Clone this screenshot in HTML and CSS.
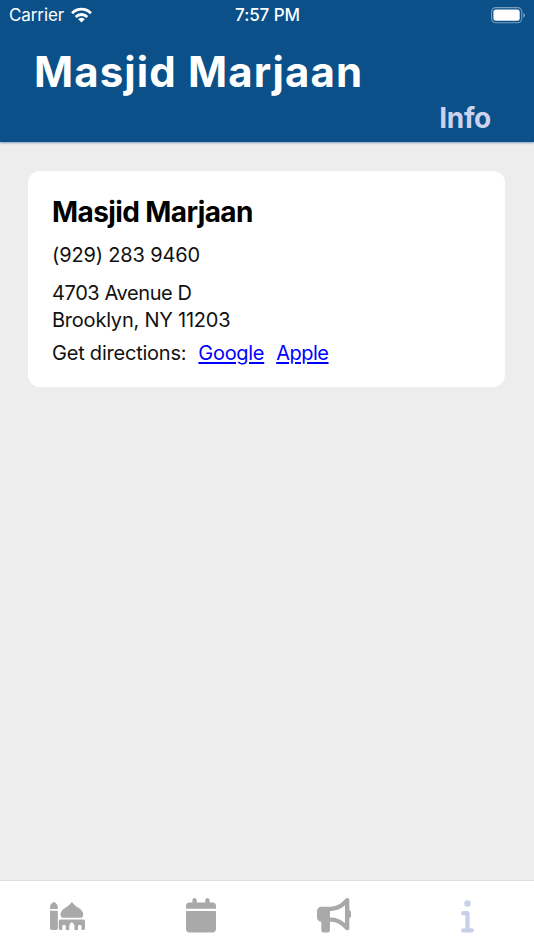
FILE: index.html
```html
<!DOCTYPE html>
<html lang="en">
<head>
<meta charset="utf-8">
<title>Masjid Marjaan</title>
<link rel="stylesheet" href="styles.css">
</head>
<body>
<header class="header">
  <div class="status">
    <div class="carrier"><span>Carrier</span>
      <svg class="wifi" viewBox="0 0 21 16"><g fill="none" stroke="#fff" stroke-width="2.9"><path d="M1.1 6.2C6.4 .8 14.6 .8 19.9 6.2"/><path d="M4.7 10C8 6.7 13 6.7 16.3 10"/></g><path fill="#fff" d="M7.2 12.2Q10.5 9.4 13.8 12.2L10.5 15.6Z"/></svg>
    </div>
    <span class="time">7:57 PM</span>
    <svg class="battery" viewBox="0 0 35 17"><rect x=".6" y=".6" width="30.2" height="15.2" rx="4.2" fill="none" stroke="#fff" stroke-opacity=".45" stroke-width="1.1"/><rect x="2.4" y="2.5" width="26.3" height="11.3" rx="2.5" fill="#fff"/><path d="M32.3 5.7q1.7.6 1.7 2.5t-1.7 2.5z" fill="#fff" fill-opacity=".45"/></svg>
  </div>
  <h1 class="title">Masjid Marjaan</h1>
  <div class="page-name">Info</div>
</header>
<main class="content">
  <section class="card">
    <h2 class="name">Masjid Marjaan</h2>
    <p class="phone">(929) 283 9460</p>
    <p class="address"><span class="street">4703 Avenue D</span><br><span class="city">Brooklyn, NY 11203</span></p>
    <p class="directions"><span>Get directions:</span><a class="google" href="#">Google</a><a class="apple" href="#">Apple</a></p>
  </section>
</main>
<nav class="tabs">
  <a class="tab"><svg class="mosque" viewBox="0 0 640 512"><path transform="scale(1.12 1)" d="M0 480c0 17.67 14.33 32 32 32h64c17.67 0 32-14.33 32-32V160H0v320zM64 0S0 32 0 96v32h128V96c0-64-64-96-64-96z"/><path d="M579.16 288c17.86-17.39 28.84-37.34 28.84-58.91 0-52.86-41.79-93.79-87.92-122.9-41.94-26.47-80.63-57.77-111.96-96.22L400 0l-8.12 9.97c-31.33 38.45-70.01 69.76-111.96 96.22C233.79 135.3 192 176.23 192 229.09c0 21.57 10.98 41.52 28.84 58.91h358.32zM608 320H192c-17.67 0-32 14.33-32 32v128c0 17.67 14.33 32 32 32h32v-64c0-17.67 14.33-32 32-32s32 14.33 32 32v64h64v-72c0-48 48-72 48-72s48 24 48 72v72h64v-64c0-17.67 14.33-32 32-32s32 14.33 32 32v64h32c17.67 0 32-14.33 32-32V352c0-17.67-14.33-32-32-32z"/></svg></a>
  <a class="tab"><svg class="calendar" viewBox="0 0 448 512"><path d="M96 32V64H48C21.5 64 0 85.5 0 112v48H448V112c0-26.5-21.5-48-48-48H352V32c0-17.7-14.3-32-32-32s-32 14.3-32 32V64H160V32c0-17.7-14.3-32-32-32S96 14.3 96 32zM448 192H0V464c0 26.5 21.5 48 48 48H400c26.5 0 48-21.5 48-48V192z"/></svg></a>
  <a class="tab"><svg class="bullhorn" viewBox="0 0 512 512"><path d="M480 32c0-12.9-7.8-24.6-19.8-29.6s-25.7-2.2-34.9 6.9L381.7 53c-48 48-113.1 75-181 75H192 160 64c-35.3 0-64 28.7-64 64v96c0 35.3 28.7 64 64 64l0 128c0 17.7 14.3 32 32 32h64c17.7 0 32-14.3 32-32V352l8.7 0c67.9 0 133 27 181 75l43.6 43.6c9.2 9.2 22.9 11.9 34.9 6.9s19.8-16.6 19.8-29.6V300.4c18.6-8.8 32-32.5 32-60.4s-13.4-51.6-32-60.4V32zm-64 76.7V240 371.3C357.2 317.8 280.5 288 200.7 288H192V192h8.7c79.8 0 156.5-29.8 215.3-83.3z"/></svg></a>
  <a class="tab active"><svg class="info" viewBox="0 0 192 512"><path d="M48 80a48 48 0 1 1 96 0A48 48 0 1 1 48 80zM0 224c0-17.7 14.3-32 32-32H96c17.7 0 32 14.3 32 32V448h32c17.7 0 32 14.3 32 32s-14.3 32-32 32H32c-17.7 0-32-14.3-32-32s14.3-32 32-32H64V256H32c-17.7 0-32-14.3-32-32z"/></svg></a>
</nav>
</body>
</html>
```
FILE: styles.css
```css
* { box-sizing: border-box; }
body { margin: 0; height: 950px; display: flex; flex-direction: column; overflow: hidden; background: #ededed; color: #111; font-family: Inter, sans-serif; }
h1, h2, p { margin: 0; white-space: nowrap; }
svg { display: block; }
.header { flex: none; height: 142px; background: #0b5089; color: #fff; box-shadow: 0 1px 2px rgba(11, 80, 137, .5); }
.status { display: grid; grid-template-columns: 1fr auto 1fr; height: 30px; align-items: center; padding: 0 8px 0 9px; font-size: 17px; line-height: 30px; }
.carrier { display: flex; align-items: center; gap: 7px; letter-spacing: -.1px; }
.wifi { width: 21px; height: 16px; }
.time { font-weight: 500; font-size: 17px; letter-spacing: -.1px; }
.battery { width: 35px; height: 17px; justify-self: end; }
.title { padding: 16px 0 0 34px; font-size: 42px; line-height: 52px; font-weight: 700; letter-spacing: 1.1px; }
.page-name { padding: 4px 43px 0 0; text-align: right; font-size: 28px; line-height: 32px; font-weight: 700; letter-spacing: -.3px; color: #ccd3ed; }
.content { flex: 1; padding: 29px 29px 0 28px; }
.card { height: 216px; background: #fff; border-radius: 12px; padding: 24px; font-size: 20px; line-height: 27px; }
.name { font-size: 28px; line-height: 34px; font-weight: 700; color: #000; letter-spacing: -.6px; }
.phone { margin-top: 13px; letter-spacing: -.15px; }
.address { margin-top: 11px; letter-spacing: -.22px; }
.street { letter-spacing: -.4px; }
.directions { margin-top: 6px; display: flex; letter-spacing: -.22px; }
.directions a { color: #00f; text-underline-offset: 2px; }
.google { margin-left: 12px; letter-spacing: -.3px; }
.apple { margin-left: 12px; letter-spacing: -.5px; }
.tabs { flex: none; height: 70px; border-top: 1px solid #ddd; background: #fff; display: grid; grid-template-columns: repeat(4, 1fr); padding-left: 1px; }
.tab { display: flex; align-items: center; justify-content: center; fill: #a9a9a9; }
.active { fill: #c7cfea; }
.mosque { width: 35px; height: 28px; }
.calendar { width: 30px; height: 34.5px; }
.bullhorn { width: 34.5px; height: 34.5px; }
.info { width: 13px; height: 34.5px; }
```
